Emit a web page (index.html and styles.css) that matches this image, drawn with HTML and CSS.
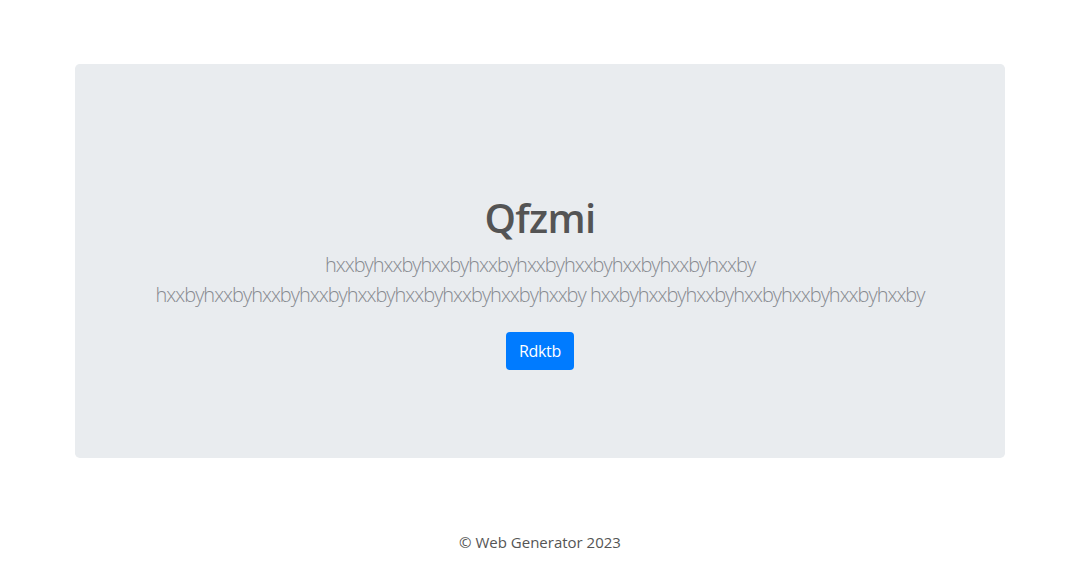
FILE: index.html
```html
<!DOCTYPE html>
<html lang="en">
<head>
<meta charset="utf-8">
<title>Qfzmi</title>
<link rel="stylesheet" href="styles.css">
</head>
<body>
<main class="container">
  <section class="jumbotron">
    <h1 class="title">Qfzmi</h1>
    <p class="lead">hxxbyhxxbyhxxbyhxxbyhxxbyhxxbyhxxbyhxxbyhxxby<br>hxxbyhxxbyhxxbyhxxbyhxxbyhxxbyhxxbyhxxbyhxxby hxxbyhxxbyhxxbyhxxbyhxxbyhxxbyhxxby</p>
    <a class="btn" href="#">Rdktb</a>
  </section>
</main>
<footer class="footer">© Web Generator 2023</footer>
</body>
</html>
```
FILE: styles.css
```css
* { box-sizing: border-box; }
html, body { margin: 0; padding: 0; }
body {
  font-family: "Open Sans", "Noto Sans", "Liberation Sans", sans-serif;
  background: #fff;
  color: #212529;
  font-size: 16px;
  line-height: 1.5;
}
.container {
  width: 960px;
  margin: 0 auto;
  padding: 64px 15px 0;
}
.jumbotron {
  background: #e9ecef;
  border-radius: 4.8px;
  height: 394px;
  padding: 130px 32px 0;
  text-align: center;
}
.title {
  margin: 0 0 8px;
  font-size: 40px;
  line-height: 48px;
  font-weight: 600;
  color: #545454;
  letter-spacing: -0.7px;
}
.lead {
  margin: 0 0 22px;
  font-size: 20px;
  line-height: 30px;
  font-weight: 300;
  color: #878a90;
  letter-spacing: -1px;
}
.btn {
  display: inline-block;
  background: #007bff;
  color: #fff;
  text-decoration: none;
  font-size: 16px;
  line-height: 24px;
  padding: 7px 13px;
  border-radius: 4px;
  letter-spacing: -0.3px;
}
.footer {
  text-align: center;
  color: #555;
  font-size: 15px;
  line-height: 24px;
  padding-top: 72px;
}
```
